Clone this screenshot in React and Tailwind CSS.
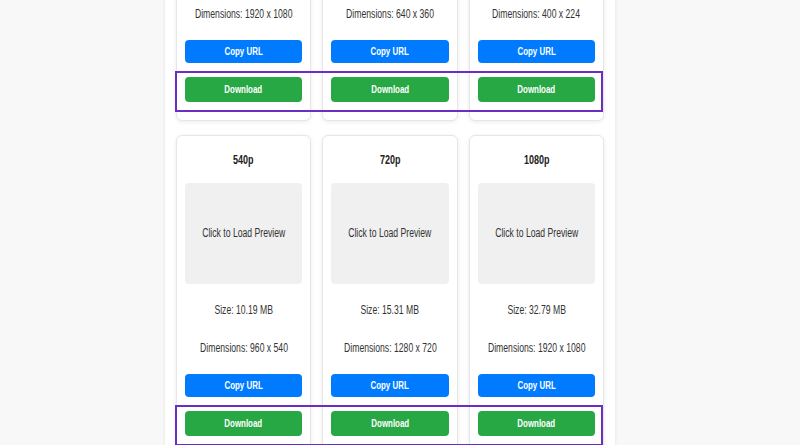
import React from "react";

const rows = [
  [
    { label: "1080p", size: "32.79 MB", dims: "1920 x 1080" },
    { label: "360p", size: "4.12 MB", dims: "640 x 360" },
    { label: "224p", size: "1.86 MB", dims: "400 x 224" },
  ],
  [
    { label: "540p", size: "10.19 MB", dims: "960 x 540" },
    { label: "720p", size: "15.31 MB", dims: "1280 x 720" },
    { label: "1080p", size: "32.79 MB", dims: "1920 x 1080" },
  ],
];

// the screenshot is squeezed sideways, so text gets a narrow scale
const Txt = ({ children }) => (
  <span className="inline-block scale-x-[0.72] whitespace-nowrap">{children}</span>
);

const Card = ({ item }) => (
  <div className="flex flex-col h-[320px] px-2 pt-2 pb-[18px] bg-white rounded-md border border-[#e6e6e6] shadow-[0_1px_4px_rgba(0,0,0,0.08)]">
    <h3 className="mt-[7px] h-[18px] leading-[18px] flex justify-center text-[12.5px] font-bold text-[#222]">
      <Txt>{item.label}</Txt>
    </h3>
    <div className="mt-[14px] h-[102px] rounded bg-[#f0f0f0] flex items-center justify-center text-[12px] text-[#333]">
      <Txt>Click to Load Preview</Txt>
    </div>
    <p className="mt-[17px] h-[18px] leading-[18px] flex justify-center text-[12px] text-[#333]">
      <Txt>Size: {item.size}</Txt>
    </p>
    <p className="mt-[20px] h-[18px] leading-[18px] flex justify-center text-[12px] text-[#333]">
      <Txt>Dimensions: {item.dims}</Txt>
    </p>
    <button className="mt-[17px] h-[24px] w-full rounded bg-[#007bff] text-white text-[11px] font-bold flex items-center justify-center">
      <Txt>Copy URL</Txt>
    </button>
    <button className="mt-[14px] h-[25px] w-full rounded bg-[#28a745] text-white text-[11px] font-bold flex items-center justify-center">
      <Txt>Download</Txt>
    </button>
  </div>
);

export default function App() {
  return (
    <div className="h-[445px] overflow-hidden bg-[#f8f8f8] font-['Liberation_Sans',Arial,sans-serif]">
      <div className="ml-[165px] w-[450px] -mt-[199px] px-[11px] pb-4 bg-white shadow-[0_0_4px_rgba(0,0,0,0.08)] flex flex-col gap-[14px]">
        {rows.map((row, r) => (
          <div key={r} className="relative grid grid-cols-3 gap-x-[11px]">
            {row.map((item, i) => (
              <Card key={i} item={item} />
            ))}
            {/* highlight around the download buttons */}
            <div className="absolute top-[270px] left-[-1px] right-[1px] h-[41px] border-2 border-[#6a2fc2] pointer-events-none" />
          </div>
        ))}
      </div>
    </div>
  );
}
